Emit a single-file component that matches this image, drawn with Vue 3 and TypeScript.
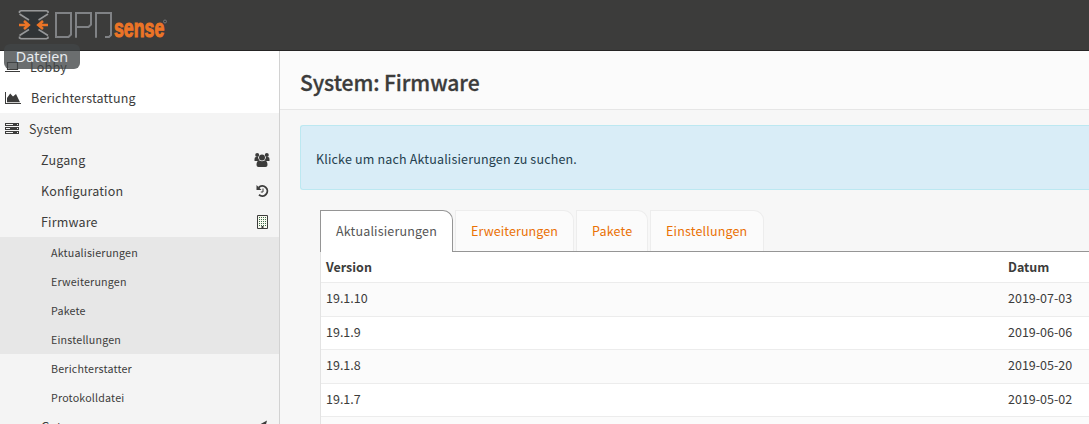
<script setup lang="ts">
interface Entry { label: string; icon: string }
const level2: Entry[] = [
  { label: 'Zugang', icon: 'users' },
  { label: 'Konfiguration', icon: 'history' },
  { label: 'Firmware', icon: 'building' },
]
const level3: string[] = ['Aktualisierungen', 'Erweiterungen', 'Pakete', 'Einstellungen', 'Berichterstatter', 'Protokolldatei']
const tabs: string[] = ['Aktualisierungen', 'Erweiterungen', 'Pakete', 'Einstellungen']
const versions: { version: string; date: string }[] = [
  { version: '19.1.10', date: '2019-07-03' },
  { version: '19.1.9', date: '2019-06-06' },
  { version: '19.1.8', date: '2019-05-20' },
  { version: '19.1.7', date: '2019-05-02' },
]
</script>

<template>
  <div class="page">
    <header class="topbar">
      <svg class="logo" width="150" height="34" viewBox="0 0 150 34">
        <path d="M2 4h26l-8 9v7l8 9H2l8-9v-7z" fill="#303436" />
        <path d="M.5 5V3.500L2 2.700H27.500L29 3.500V5M.5 28.500V30L2 30.800H27.500L29 30V28.500" stroke="#96989a" stroke-width="1.600" fill="none" />
        <path d="M.5 6L10 12M29 6L19.500 12M.5 27.500L10 21.500M29 27.500L19.500 21.500" stroke="#96989a" stroke-width="1.500" fill="none" />
        <path d="M0 17H9M5 13L9.700 17L5 21M29 17H20M24 13L19.300 17L24 21" stroke="#ec7426" stroke-width="2.600" fill="none" />
        <path d="M37 5h15v21.500l-2.500 2.500H37zM57 29.700V5h15V16.500l-2.500 2.500H57M77 29.700V5H92v22l-2 2h-4" stroke="#808285" stroke-width="2" fill="none" />
        <text class="brand" x="95" y="29.300" textLength="50.300" lengthAdjust="spacingAndGlyphs">sense</text>
        <circle cx="146" cy="13.500" r="1.500" stroke="#808285" stroke-width=".8" fill="none" />
      </svg>
    </header>
    <div class="body">
      <nav class="sidebar">
        <a class="main lobby">
          <svg class="ic" width="16" height="14" viewBox="0 0 16 14"><path d="M2.500 2.500h10v7h-10zM0 11.500h15" fill="none" stroke="#3c3c3b" stroke-width="1.200" /></svg>
          <span>Lobby</span>
        </a>
        <a class="main report">
          <svg class="ic" width="16" height="14" viewBox="0 0 16 14"><path d="M0 1h1v11h15v1H0zM2 11.200V7l3.200-4.500L8 5.500l3-2.500L15 11.200z" fill="#3c3c3b" /></svg>
          <span>Berichterstattung</span>
        </a>
        <div class="open">
          <a class="main">
            <svg class="ic" width="16" height="14" viewBox="0 0 16 14"><path d="M0 1h14v3H0zM0 5h14v3H0zM0 9h14v3H0z" fill="#3c3c3b" /><path d="M1 2.500h7M1 6.500h4M1 10.500h7M12 2.500h1M12 6.500h1M12 10.500h1" stroke="#f4f4f4" /></svg>
            <span>System</span>
          </a>
          <a v-for="e in level2" :key="e.label" class="second">
            <span>{{ e.label }}</span>
            <svg v-if="e.icon === 'users'" class="users" width="16" height="16" viewBox="0 0 16 16" fill="#3c3c3b"><circle cx="3.200" cy="3" r="2" /><circle cx="12.800" cy="3" r="2" /><circle cx="8" cy="5.500" r="3" /><path d="M.5 9V7q0-2 1.500-2h2q.3 2.500 1.500 3L4 9zM15.500 9V7q0-2-1.500-2h-2q-.3 2.500-1.500 3L12 9zM2.500 13q0-4.500 2.800-4.500Q8 10 10.700 8.500q2.800 0 2.800 4.500 0 2-2 2H4.500q-2 0-2-2z" /></svg>
            <svg v-else-if="e.icon === 'history'" width="16" height="16" viewBox="0 0 16 16"><path d="M3.700 4.600A5 5 0 1 1 4 11.800" fill="none" stroke="#3c3c3b" stroke-width="1.900" /><path d="M1.500 2v5h5z" fill="#3c3c3b" /><path d="M8 5.500v3.500H5.800" fill="none" stroke="#3c3c3b" /></svg>
            <svg v-else width="16" height="16" viewBox="0 0 16 16"><path d="M2.500 1.500h10v13h-10z" fill="#fafaf0" stroke="#3c3c3b" /><path d="M4 3.500h8M4 5.500h8M4 7.500h8M4 9.500h8M4 11.500h8" stroke="#3c6c4b" stroke-dasharray="1 1" /><path d="M6.500 12h2v2.500h-2z" fill="#3c3c3b" /></svg>
          </a>
          <a v-for="(label, i) in level3" :key="label" class="third" :class="{ shaded: i < 4 }">{{ label }}</a>
          <a class="second gateways">
            <span>Gateways</span>
            <svg width="16" height="16" viewBox="0 0 16 16"><path d="M12 1.500L8.500 15 7 8.500 2 7z" fill="#3c3c3b" /></svg>
          </a>
        </div>
      </nav>
      <main class="content">
        <div class="heading"><h1>System: Firmware</h1></div>
        <div class="alert">Klicke um nach Aktualisierungen zu suchen.</div>
        <section class="panel">
          <div class="tabs">
            <a v-for="(tab, i) in tabs" :key="tab" class="tab" :class="['t' + i, { active: i === 0 }]"><span>{{ tab }}</span></a>
          </div>
          <div class="table">
            <div class="row head"><span>Version</span><span>Datum</span></div>
            <div v-for="v in versions" :key="v.version" class="row"><span>{{ v.version }}</span><span>{{ v.date }}</span></div>
            <div class="row"></div>
          </div>
        </section>
      </main>
    </div>
    <div class="tooltip">Dateien</div>
  </div>
</template>

<style>
html, body { margin: 0; overflow: hidden; }
</style>
<style scoped>
* { box-sizing: border-box; }
.page { position: relative; width: 1089px; height: 424px; overflow: hidden; display: flex; flex-direction: column; font-family: "Noto Sans CJK SC", "Open Sans", sans-serif; font-size: 12.5px; line-height: 20px; letter-spacing: .17px; color: #3c3c3b; background: #f7f7f7; }
.topbar { height: 51px; flex: none; background: #3c3c3b; border-bottom: 1px solid #252424; padding: 8px 0 0 19px; }
.logo { display: block; overflow: visible; }
.brand { font: 700 26px "Liberation Sans", Arial, sans-serif; letter-spacing: 0; fill: #ec7426; stroke: #ec7426; stroke-width: 1.1; }
.body { display: flex; height: 373px; }
.sidebar { width: 280px; flex: none; background: #fff; border-right: 1px solid #d2d2d2; overflow: hidden; }
.main { height: 31px; display: flex; align-items: center; padding-left: 5px; }
.main .ic { flex: none; margin-right: 8px; }
.lobby .ic { margin-right: 9px; }
.report .ic { margin-right: 10px; }
.open { background: #f4f4f4; }
.second { height: 31px; display: flex; align-items: center; justify-content: space-between; padding: 0 9px 0 41px; }
.second svg { margin-right: -1px; }
.second svg.users { margin-right: 0; }
.gateways { padding-top: 1px; }
.third { height: 29px; display: flex; align-items: center; padding-left: 51px; font-size: 10.7px; letter-spacing: .18px; padding-top: 2px; }
.shaded { background: #e7e7e7; }
.shaded:has(+ .third:not(.shaded)) { box-shadow: 0 1px #e7e7e7; }
.content { flex: 1; min-width: 0; display: flex; flex-direction: column; }
.heading { height: 59px; flex: none; background: #fbfbfb; border-bottom: 1px solid #e6e6e6; padding: 15px 0 0 20px; }
h1 { margin: 0; font-size: 21.1px; line-height: 32px; font-weight: 500; letter-spacing: -.1px; -webkit-text-stroke: .3px #3c3c3b; }
.alert { height: 65px; flex: none; margin: 15px 0 20px 20px; border: 1px solid #bce8f1; border-right: 0; border-radius: 3px 0 0 3px; background: #d9edf7; color: #24404e; padding: 23px 0 0 15px; }
.panel { margin-left: 40px; }
.tabs { height: 42px; display: flex; border-bottom: 1px solid #959595; }
.tab { height: 41px; border: 1px solid #ededed; border-bottom: 0; border-radius: 0 10px 0 0; background: #fbfbfb; color: #ea7105; padding: 10px 0 0 15px; margin-right: 2px; white-space: nowrap; }
.t0 { width: 133px; }
.t1 { width: 119px; letter-spacing: .1px; }
.t2 { width: 72px; }
.t3 { width: 114px; }
.tab.active { height: 42px; background: #fff; border-color: #959595; color: #555; }
.table { border-left: 1px solid #e3e3e3; letter-spacing: 0; }
.row { height: 33.6px; display: grid; grid-template-columns: 682px 1fr; padding: 5px 0 0 5px; background: #fff; border-bottom: 1px solid #ececec; }
.row:nth-child(even) { background: #fbfbfb; }
.row.head { height: 31px; font-weight: 700; }
.tooltip { position: absolute; left: 4px; top: 44px; width: 76px; height: 25px; border-radius: 6px; background: rgba(65, 69, 70, .78); color: #e8ecf0; font: 14.3px/25px "Noto Sans", sans-serif; letter-spacing: 0; text-align: center; }
</style>
